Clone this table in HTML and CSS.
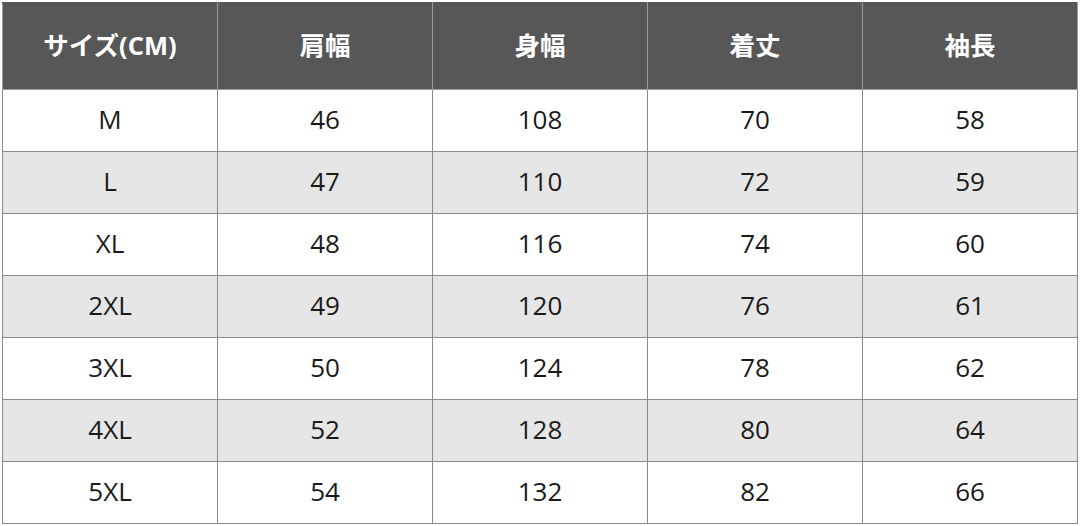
FILE: index.html
```html
<!DOCTYPE html>
<html lang="ja">
<head>
<meta charset="utf-8">
<link rel="stylesheet" href="styles.css">
</head>
<body>
<table class="size-table">
  <thead>
    <tr><th>サイズ(CM)</th><th>肩幅</th><th>身幅</th><th>着丈</th><th>袖長</th></tr>
  </thead>
  <tbody>
    <tr><td>M</td><td>46</td><td>108</td><td>70</td><td>58</td></tr>
    <tr class="alt"><td>L</td><td>47</td><td>110</td><td>72</td><td>59</td></tr>
    <tr><td>XL</td><td>48</td><td>116</td><td>74</td><td>60</td></tr>
    <tr class="alt"><td>2XL</td><td>49</td><td>120</td><td>76</td><td>61</td></tr>
    <tr><td>3XL</td><td>50</td><td>124</td><td>78</td><td>62</td></tr>
    <tr class="alt"><td>4XL</td><td>52</td><td>128</td><td>80</td><td>64</td></tr>
    <tr><td>5XL</td><td>54</td><td>132</td><td>82</td><td>66</td></tr>
  </tbody>
</table>
</body>
</html>
```
FILE: styles.css
```css
html, body { margin: 0; padding: 0; background: #fff; }
body { padding: 2px 2px 0 2px; }
.size-table {
  width: 1076px;
  border-collapse: collapse;
  table-layout: fixed;
  font-family: "Open Sans", "Noto Sans CJK JP", sans-serif;
}
.size-table th, .size-table td {
  border: 1px solid #8a8a8a;
  text-align: center;
  padding: 0;
}
.size-table th {
  background: #575757;
  color: #fff;
  height: 84px;
  font-family: "Open Sans", "Noto Sans CJK JP", sans-serif;
  font-weight: 700;
  font-size: 25.5px;
  line-height: 1.2;
  padding-bottom: 2px;
  border-color: #9a9a9a;
  border-top-color: #575757;
}
.size-table td {
  height: 59px;
  font-size: 26px;
  line-height: 1.2;
  padding-bottom: 2px;
  color: #1a1a1a;
}
.size-table tr.alt td { background: #e6e6e6; }
```
